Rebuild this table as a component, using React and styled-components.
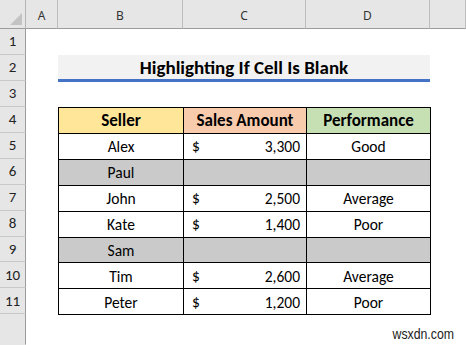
import React from 'react';
import styled, { createGlobalStyle } from 'styled-components';

// sheet look, cells drawn on a grid
const GlobalStyle = createGlobalStyle`
  html, body {
    margin: 0;
    padding: 0;
    background: #fff;
  }
  #root {
    height: 345px;
  }
`;

const Sheet = styled.div`
  position: relative;
  display: grid;
  grid-template-columns: 26px 32px 125px 123px 124px 1fr;
  grid-template-rows: 29px repeat(11, 25.95px) 1fr;
  width: 466px;
  height: 345px;
  overflow: hidden;
  background: #fff;
  font-family: Carlito, Calibri, Lato, sans-serif;
  color: #000;
`;

const Corner = styled.div`
  position: relative;
  background: #e6e6e6;
  border-right: 1px solid #b4b4b4;
  border-bottom: 1px solid #9c9c9c;
  box-sizing: border-box;
  &::after {
    content: '';
    position: absolute;
    right: 3px;
    bottom: 3px;
    width: 0;
    height: 0;
    border-left: 12px solid transparent;
    border-bottom: 12px solid #c3c3c3;
  }
`;

const ColHeader = styled.div`
  display: flex;
  align-items: center;
  justify-content: center;
  background: #e6e6e6;
  border-right: 1px solid #bdbdbd;
  border-bottom: 1px solid #9c9c9c;
  box-sizing: border-box;
  padding-top: 2px;
  font-family: "Noto Sans", "DejaVu Sans", sans-serif;
  font-size: 12px;
  color: #333;
`;

const RowHeader = styled.div`
  display: flex;
  align-items: center;
  justify-content: center;
  grid-column: 1;
  background: #e6e6e6;
  border-right: 1px solid #9c9c9c;
  border-bottom: 1px solid ${p => (p.$filler ? 'transparent' : '#c9c9c9')};
  box-sizing: border-box;
  font-size: 15px;
  color: #222;
`;

const Title = styled.div`
  grid-row: 3;
  grid-column: 3 / 6;
  margin-bottom: -1px;
  display: flex;
  align-items: center;
  justify-content: center;
  background: #f2f2f2;
  border-bottom: 3px solid #4472c4;
  font-size: 19px;
  font-weight: 700;
  padding-top: 1px;
`;

const Table = styled.div`
  grid-row: 5 / 13;
  grid-column: 3 / 6;
  margin-right: -1px;
  margin-bottom: -1px;
  display: grid;
  grid-template-columns: 124px 122px 1fr;
  grid-auto-rows: 1fr;
  gap: 1px;
  padding: 1px;
  background: #000;
`;

const Cell = styled.div`
  display: flex;
  align-items: center;
  justify-content: center;
  background: ${p => p.$bg || '#fff'};
  font-size: ${p => (p.$head ? '17px' : '15.5px')};
  font-weight: ${p => (p.$head ? 700 : 400)};
  padding-top: 1px;
`;

const MoneyCell = styled(Cell)`
  justify-content: space-between;
  padding: 1px 6px 0 8px;
`;

const Watermark = styled.div`
  position: absolute;
  right: 12px;
  bottom: 3px;
  font-family: "Liberation Sans", Arial, sans-serif;
  font-size: 15px;
  color: #222;
  transform: scaleX(0.82);
  transform-origin: right center;
`;

const rows = [
  { seller: 'Alex', amount: '3,300', perf: 'Good' },
  { seller: 'Paul', blank: true },
  { seller: 'John', amount: '2,500', perf: 'Average' },
  { seller: 'Kate', amount: '1,400', perf: 'Poor' },
  { seller: 'Sam', blank: true },
  { seller: 'Tim', amount: '2,600', perf: 'Average' },
  { seller: 'Peter', amount: '1,200', perf: 'Poor' },
];

const GRAY = '#cacaca';

export default function App() {
  return (
    <>
      <GlobalStyle />
      <Sheet>
        <Corner />
        {['A', 'B', 'C', 'D', ''].map((c, i) => (
          <ColHeader key={i}>{c}</ColHeader>
        ))}
        {Array.from({ length: 11 }, (_, i) => (
          <RowHeader key={i} style={{ gridRow: i + 2 }}>{i + 1}</RowHeader>
        ))}
        <RowHeader $filler style={{ gridRow: 13 }} />

        <Title>Highlighting If Cell Is Blank</Title>

        <Table>
          <Cell $head $bg="#ffe699">Seller</Cell>
          <Cell $head $bg="#f8cbad">Sales Amount</Cell>
          <Cell $head $bg="#c6e0b4">Performance</Cell>
          {rows.map(r =>
            r.blank ? (
              <React.Fragment key={r.seller}>
                <Cell $bg={GRAY}>{r.seller}</Cell>
                <Cell $bg={GRAY} />
                <Cell $bg={GRAY} />
              </React.Fragment>
            ) : (
              <React.Fragment key={r.seller}>
                <Cell>{r.seller}</Cell>
                <MoneyCell>
                  <span>$</span>
                  <span>{r.amount}</span>
                </MoneyCell>
                <Cell>{r.perf}</Cell>
              </React.Fragment>
            )
          )}
        </Table>

        <Watermark>wsxdn.com</Watermark>
      </Sheet>
    </>
  );
}
